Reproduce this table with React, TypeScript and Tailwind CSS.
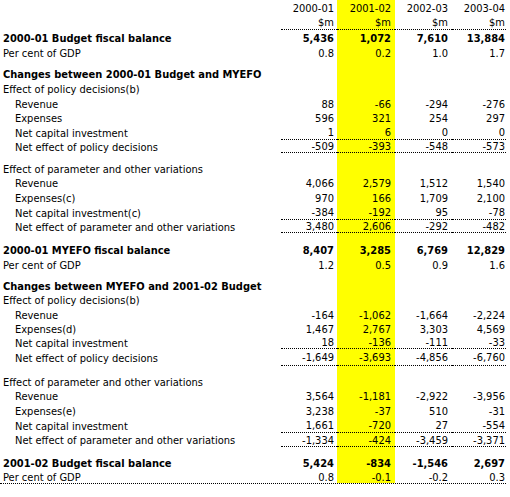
import React from "react";

type Row =
  | { gap: number }
  | {
      label: string;
      vals?: string[];
      h: number;
      bold?: boolean;
      indent?: boolean;
      line?: boolean;
    };

const rows: Row[] = [
  { label: "2000-01 Budget fiscal balance", vals: ["5,436", "1,072", "7,610", "13,884"], h: 15, bold: true },
  { label: "Per cent of GDP", vals: ["0.8", "0.2", "1.0", "1.7"], h: 15 },
  { gap: 7 },
  { label: "Changes between 2000-01 Budget and MYEFO", h: 14, bold: true },
  { label: "Effect of policy decisions(b)", h: 15 },
  { label: "Revenue", vals: ["88", "-66", "-294", "-276"], h: 15, indent: true },
  { label: "Expenses", vals: ["596", "321", "254", "297"], h: 14, indent: true },
  { label: "Net capital investment", vals: ["1", "6", "0", "0"], h: 15, indent: true, line: true },
  { label: "Net effect of policy decisions", vals: ["-509", "-393", "-548", "-573"], h: 13, indent: true, line: true },
  { gap: 8 },
  { label: "Effect of parameter and other variations", h: 15 },
  { label: "Revenue", vals: ["4,066", "2,579", "1,512", "1,540"], h: 14, indent: true },
  { label: "Expenses(c)", vals: ["970", "166", "1,709", "2,100"], h: 15, indent: true },
  { label: "Net capital investment(c)", vals: ["-384", "-192", "95", "-78"], h: 15, indent: true, line: true },
  { label: "Net effect of parameter and other variations", vals: ["3,480", "2,606", "-292", "-482"], h: 13, indent: true, line: true },
  { gap: 10 },
  { label: "2000-01 MYEFO fiscal balance", vals: ["8,407", "3,285", "6,769", "12,829"], h: 14, bold: true },
  { label: "Per cent of GDP", vals: ["1.2", "0.5", "0.9", "1.6"], h: 15 },
  { gap: 6 },
  { label: "Changes between MYEFO and 2001-02 Budget", h: 15, bold: true },
  { label: "Effect of policy decisions(b)", h: 14 },
  { label: "Revenue", vals: ["-164", "-1,062", "-1,664", "-2,224"], h: 15, indent: true },
  { label: "Expenses(d)", vals: ["1,467", "2,767", "3,303", "4,569"], h: 14, indent: true },
  { label: "Net capital investment", vals: ["18", "-136", "-111", "-33"], h: 13, indent: true, line: true },
  { label: "Net effect of policy decisions", vals: ["-1,649", "-3,693", "-4,856", "-6,760"], h: 17, indent: true, line: true },
  { gap: 8 },
  { label: "Effect of parameter and other variations", h: 15 },
  { label: "Revenue", vals: ["3,564", "-1,181", "-2,922", "-3,956"], h: 14, indent: true },
  { label: "Expenses(e)", vals: ["3,238", "-37", "510", "-31"], h: 15, indent: true },
  { label: "Net capital investment", vals: ["1,661", "-720", "27", "-554"], h: 15, indent: true, line: true },
  { label: "Net effect of parameter and other variations", vals: ["-1,334", "-424", "-3,459", "-3,371"], h: 14, indent: true, line: true },
  { gap: 8 },
  { label: "2001-02 Budget fiscal balance", vals: ["5,424", "-834", "-1,546", "2,697"], h: 15, bold: true },
  { label: "Per cent of GDP", vals: ["0.8", "-0.1", "-0.2", "0.3"], h: 13 },
];

// widths of the four year columns, the second one is highlighted
const cols = ["w-[56px] pr-[3px]", "w-[58px] pr-[4px] bg-[#ffff00]", "w-[57px] pr-[4px]", "w-[54px] pr-[1px]"];

function Cells({ vals, line }: { vals: string[]; line?: boolean }) {
  return (
    <>
      {vals.map((v, i) => (
        <div
          key={i}
          className={`${cols[i]} flex items-center justify-end pt-[1px] ${line ? "border-b border-dotted border-black" : ""}`}
        >
          {v}
        </div>
      ))}
    </>
  );
}

export default function App() {
  return (
    <div className="w-[510px] bg-white text-[11px] text-black font-['DejaVu_Sans_Condensed','DejaVu_Sans',sans-serif] leading-none">
      <div className="flex h-[15px]">
        <div className="w-[281px]" />
        <Cells vals={["2000-01", "2001-02", "2002-03", "2003-04"]} />
      </div>
      <div className="flex h-[15px]">
        <div className="w-[281px]" />
        <Cells vals={["$m", "$m", "$m", "$m"]} line />
      </div>
      {rows.map((r, i) => {
        if ("gap" in r) {
          return (
            <div key={i} className="flex" style={{ height: r.gap }}>
              <div className="w-[281px]" />
              <Cells vals={["", "", "", ""]} />
            </div>
          );
        }
        return (
          <div key={i} className={`flex ${r.bold ? "font-bold" : ""}`} style={{ height: r.h }}>
            <div className={`w-[281px] flex items-center pt-[1px] whitespace-nowrap ${r.indent ? "pl-[15px]" : "pl-[3px]"}`}>
              {r.label}
            </div>
            <Cells vals={r.vals ?? ["", "", "", ""]} line={r.line} />
          </div>
        );
      })}
      <div className="w-[506px] border-t border-dotted border-black" />
    </div>
  );
}
